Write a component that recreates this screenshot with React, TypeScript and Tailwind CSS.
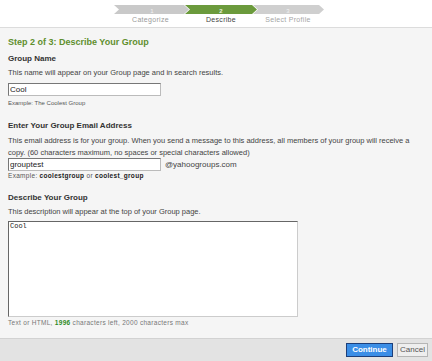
import React from 'react';

const font = { fontFamily: '"Liberation Sans", Arial, sans-serif' };

function StepBar() {
  // chevrons for the three steps
  const seg = (x: number, w: number) =>
    `${x},0 ${x + w},0 ${x + w + 5},4.5 ${x + w},9 ${x},9 ${x + 5},4.5`;
  return (
    <div className="flex flex-col pl-[114px] pt-[5px]">
      <svg width="210" height="10" viewBox="0 0 210 10">
        <polygon points={seg(0, 70)} fill="#c9c9c9" />
        <polygon points={seg(71, 67)} fill="#6b9a3c" />
        <polygon points={seg(139, 66)} fill="#cfcfcf" />
        <text x="38" y="7.5" fontSize="6" fill="#f2f2f2" textAnchor="middle" style={font}>1</text>
        <text x="107" y="7.5" fontSize="6" fill="#e8f0dc" textAnchor="middle" fontWeight="bold" style={font}>2</text>
        <text x="174" y="7.5" fontSize="6" fill="#f2f2f2" textAnchor="middle" style={font}>3</text>
      </svg>
      <div className="flex text-[7px] leading-[9px] tracking-[0.3px]">
        <span className="w-[73px] text-center text-[#9a9a9a]">Categorize</span>
        <span className="w-[68px] text-center text-[#444]">Describe</span>
        <span className="w-[66px] text-center text-[#a5a5a5]">Select Profile</span>
      </div>
    </div>
  );
}

export default function App() {
  return (
    <div className="w-[432px] h-[361px] flex flex-col bg-[#f5f5f5] text-[#333]" style={font}>
      {/* Header with wizard steps */}
      <div className="h-[28px] bg-white border-b border-[#dcdcdc]">
        <StepBar />
      </div>

      {/* Form body */}
      <div className="flex-1 px-[8px] pt-[8px]">
        <h1 className="text-[9px] leading-[12px] font-bold text-[#5f8f2e]">Step 2 of 3: Describe Your Group</h1>

        <h2 className="mt-[5px] text-[8px] leading-[11px] font-bold text-[#333]">Group Name</h2>
        <p className="mt-[4px] text-[7.5px] leading-[10px] text-[#444]">This name will appear on your Group page and in search results.</p>
        <input
          defaultValue="Cool"
          className="mt-[5px] block w-[153px] h-[13px] bg-white border border-t-[#777] border-l-[#777] border-r-[#bbb] border-b-[#bbb] px-[1px] text-[8px] text-[#222] outline-none"
        />
        <p className="mt-[3px] text-[6px] leading-[9px] text-[#555]">Example: The Coolest Group</p>

        <h2 className="mt-[12px] text-[8px] leading-[11px] font-bold text-[#333]">Enter Your Group Email Address</h2>
        <p className="mt-[4px] text-[7.5px] leading-[12px] text-[#444]">
          This email address is for your group. When you send a message to this address, all members of your group will receive a copy. (60 characters maximum, no spaces or special characters allowed)
        </p>
        <div className="mt-[-1px] flex items-center gap-[4px]">
          <input
            defaultValue="grouptest"
            className="block w-[153px] h-[13px] bg-white border border-t-[#777] border-l-[#777] border-r-[#bbb] border-b-[#bbb] px-[1px] text-[8px] text-[#222] outline-none"
          />
          <span className="text-[8px] text-[#444]">@yahoogroups.com</span>
        </div>
        <p className="mt-0 text-[6.5px] leading-[9px] tracking-[0.3px] text-[#555]">
          Example: <b className="text-[#222]">coolestgroup</b> or <b className="text-[#222]">coolest_group</b>
        </p>

        <h2 className="mt-[12px] text-[8px] leading-[11px] font-bold text-[#333]">Describe Your Group</h2>
        <p className="mt-[4px] text-[7.5px] leading-[10px] text-[#444]">This description will appear at the top of your Group page.</p>
        <textarea
          defaultValue="Cool"
          className="mt-[4px] block w-[290px] h-[96px] resize-none bg-white border border-t-[#666] border-l-[#666] border-r-[#ccc] border-b-[#ccc] px-[1px] py-0 text-[7px] leading-[9px] text-[#222] outline-none"
          style={{ fontFamily: '"Liberation Mono", "Courier New", monospace' }}
        />
        <p className="mt-[1px] text-[6.5px] leading-[9px] tracking-[0.3px] text-[#777]">
          Text or HTML, <b className="text-[#2d8a1e]">1996</b> characters left, 2000 characters max
        </p>
      </div>

      {/* Footer buttons */}
      <div className="h-[23px] bg-[#e3e3e3] border-t border-[#d2d2d2] flex items-center justify-end gap-[4px] pr-[4px]">
        <button className="h-[14px] w-[47px] bg-[#3b8ee6] border border-[#1d3f7a] text-white text-[8px] font-bold leading-none">
          Continue
        </button>
        <button className="h-[14px] w-[31px] bg-[#eeeeee] border border-[#b5b5b5] text-[#555] text-[8px] leading-none">
          Cancel
        </button>
      </div>
    </div>
  );
}
